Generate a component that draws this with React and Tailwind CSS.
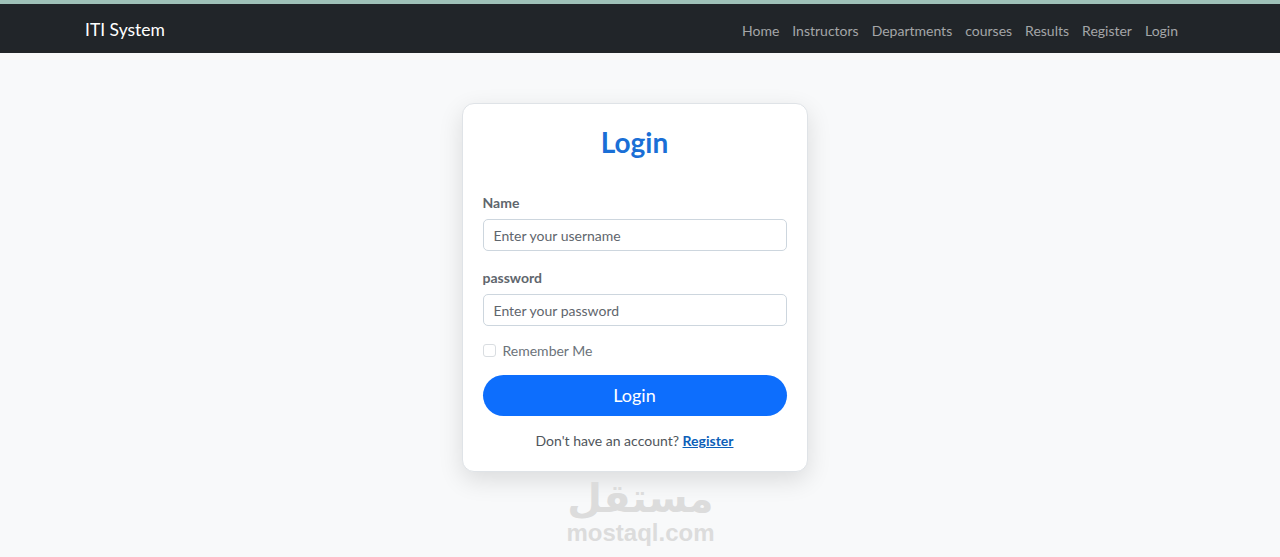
import React, { useState } from 'react';

const links = ['Home', 'Instructors', 'Departments', 'courses', 'Results', 'Register', 'Login'];

const Navbar = () => (
  <nav className="bg-[#212529] border-t-[4px] border-[#9fc1b8]">
    <div className="h-[49px] pt-[3px] mx-auto w-[1110px] flex items-center justify-between">
      <span className="text-white text-[17.5px]">ITI System</span>
      <ul className="flex items-center gap-[13px] mr-[17px]">
        {links.map(l => (
          <li key={l} className="text-[14px] text-[#a4a6a8]">{l}</li>
        ))}
      </ul>
    </div>
  </nav>
);

const App = () => {
  const [remember, setRemember] = useState(false);

  return (
    <div className="min-h-[557px] bg-[#f8f9fa] font-['Lato',sans-serif] overflow-hidden">
      <Navbar />

      {/* Login card */}
      <div className="flex flex-col items-center pt-[50px] pr-[11px]">
        <div className="w-[346px] bg-white rounded-[12px] border border-[#dfe3e7] shadow-[0_8px_24px_rgba(0,0,0,0.12)] px-[20px] pt-[20px] pb-[20px]">
          <h1 className="text-center text-[28px] font-bold text-[#1a6fd6] leading-[36px]">Login</h1>

          <form className="mt-[32px]" onSubmit={e => e.preventDefault()}>
            <label className="block text-[14px] font-bold text-[#5f666d] mb-[6px]">Name</label>
            <input
              type="text"
              placeholder="Enter your username"
              className="w-full h-[32px] px-[10px] text-[14px] border border-[#cdd6de] rounded-[5px] placeholder-[#5f666d] outline-none"
            />

            <label className="block text-[14px] font-bold text-[#5f666d] mt-[16px] mb-[6px]">password</label>
            <input
              type="password"
              placeholder="Enter your password"
              className="w-full h-[32px] px-[10px] text-[14px] border border-[#cdd6de] rounded-[5px] placeholder-[#5f666d] outline-none"
            />

            <label className="flex items-center gap-[7px] mt-[14px] text-[14px] text-[#6c737a]">
              <input
                type="checkbox"
                checked={remember}
                onChange={() => setRemember(!remember)}
                className="appearance-none w-[13px] h-[13px] border border-[#d9dde1] rounded-[3px] bg-white"
              />
              Remember Me
            </label>

            <button
              type="submit"
              className="w-full h-[41px] mt-[14px] rounded-full bg-[#0d6efd] text-white text-[18px]"
            >
              Login
            </button>

            <p className="text-center text-[14px] text-[#4f555b] mt-[14px]">
              Don't have an account? <a href="#" className="text-[#0d5fb8] underline font-bold">Register</a>
            </p>
          </form>
        </div>

        {/* Watermark */}
        <div className="flex flex-col items-center mt-[6px] ml-[12px] text-[#dcdcdc] select-none">
          <span className="text-[40px] font-bold font-['DejaVu_Sans',sans-serif] leading-[40px]">مستقل</span>
          <span className="text-[24px] font-bold font-['Liberation_Sans',sans-serif] leading-[26px] mt-[2px]">mostaql.com</span>
        </div>
      </div>
    </div>
  );
};

export default App;
